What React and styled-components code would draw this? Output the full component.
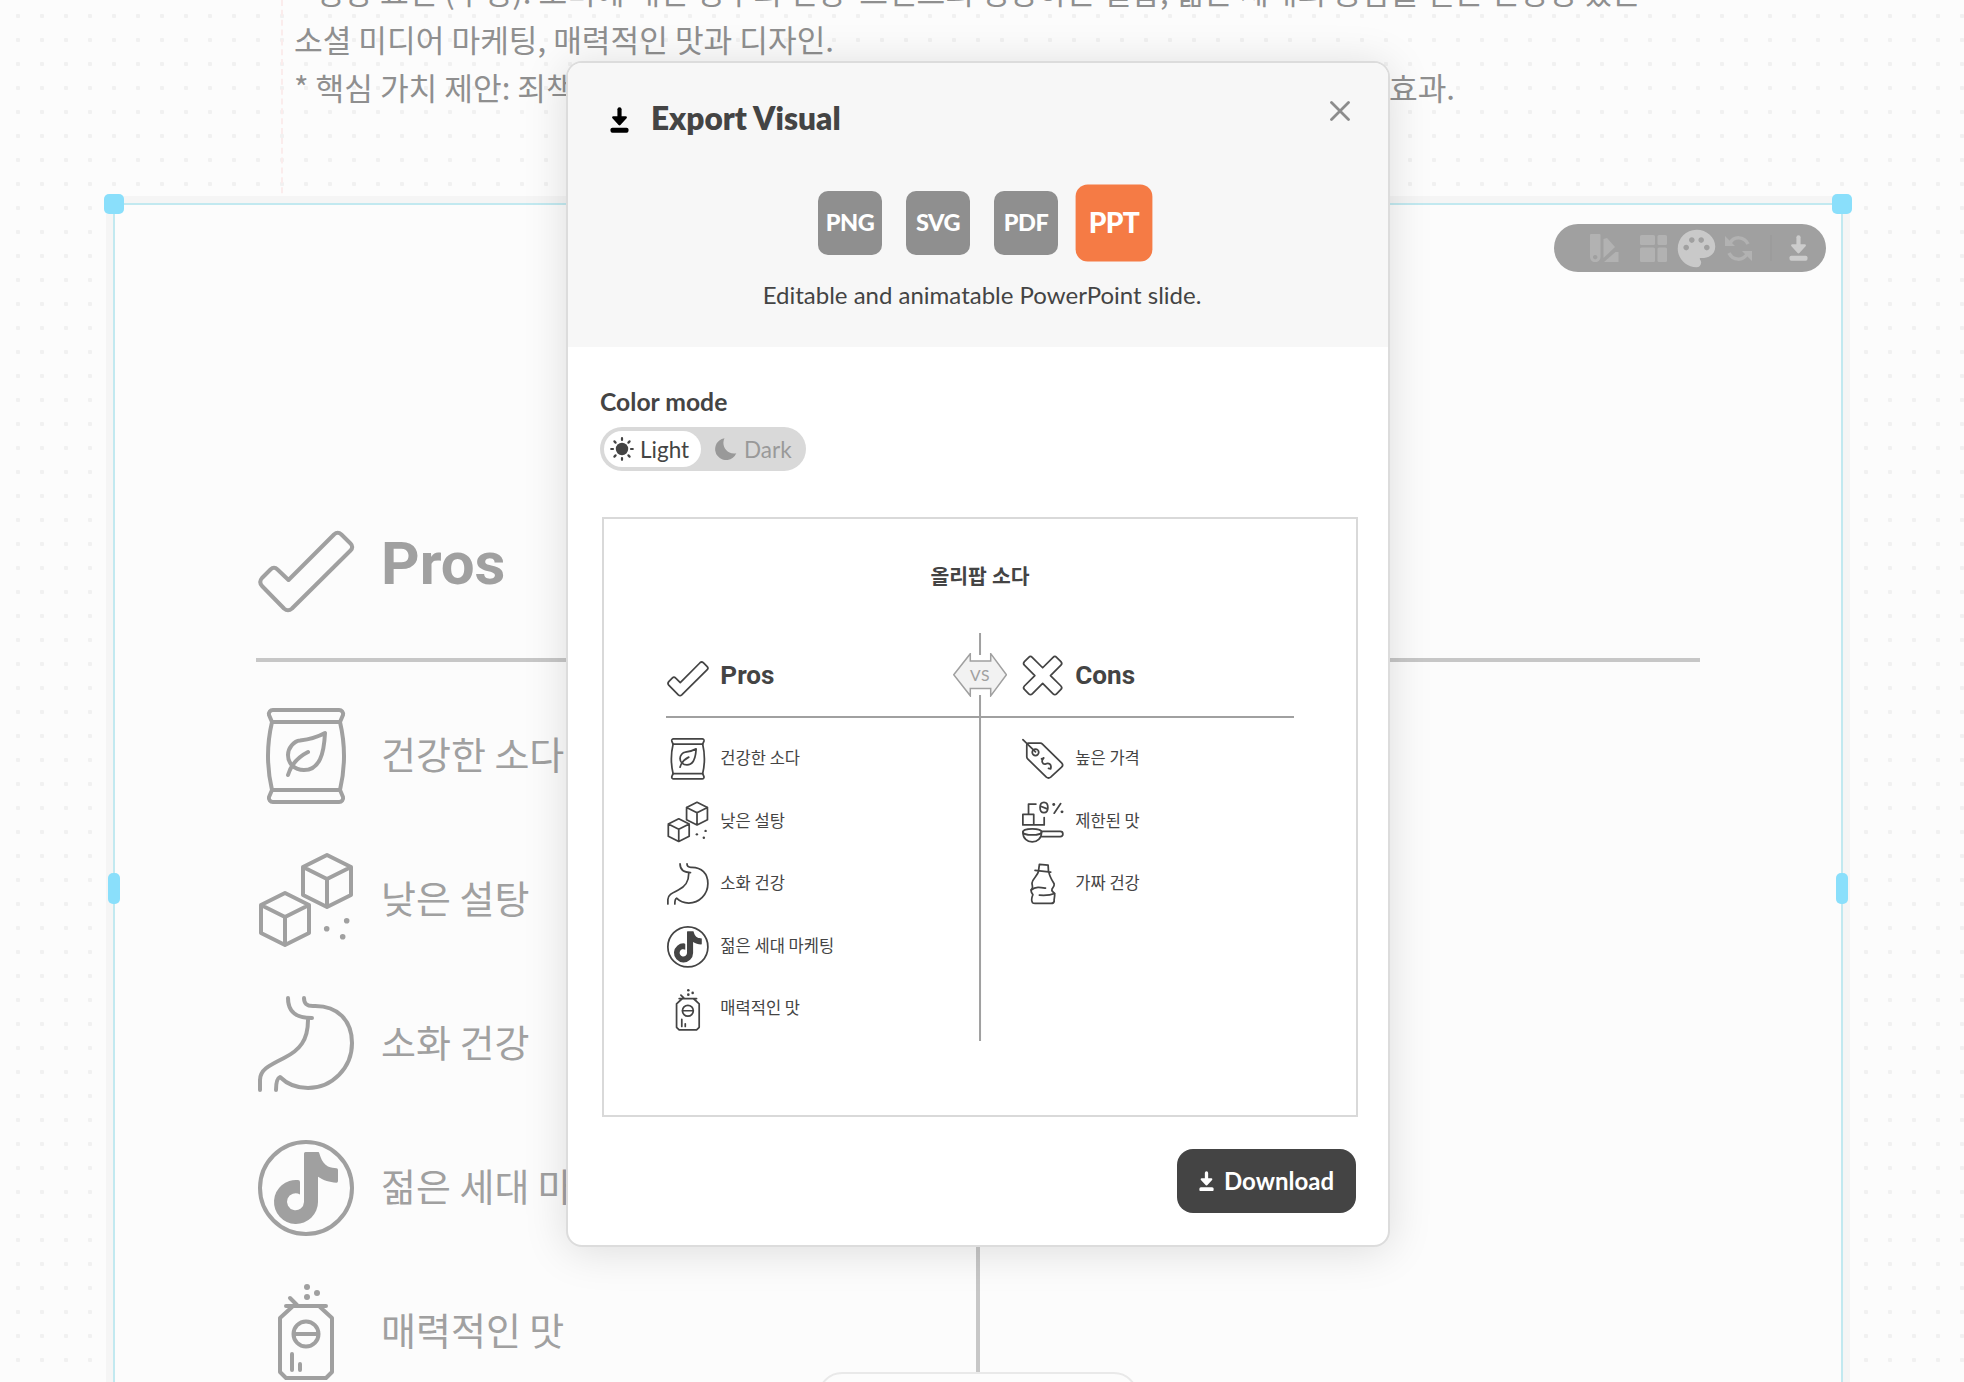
import styled, { createGlobalStyle, css, ThemeProvider } from "styled-components";
import { MdPalette } from "react-icons/md";

const GlobalStyle = createGlobalStyle`
    * {
        box-sizing: border-box;
    }
    body {
        margin: 0;
        background: #fcfcfc;
        font-family: Lato, "Noto Sans CJK KR", sans-serif;
        color: #444;
    }
    button {
        font: inherit;
        border: none;
        padding: 0;
        cursor: pointer;
    }
`;

// one chart is drawn twice: on the page and in the export preview
const pageChart = { unit: 1, rule: "4px", ink: "#a0a0a0", line: "#c7c7c7", badge: "#f8f8f8" };
const previewChart = { unit: 0.435, rule: "2px", ink: "#444", line: "#a0a0a0", badge: "#f2f2f2" };

const px = (n) => (p) => `${n * p.theme.unit}px`;

const icons = {
    check: (
        <path d="M30.500 61L76 15.500q3.700-3.500 7.400 0L92.500 24.500q3.500 3.500 0 7L34 89.500q-4 3.500-8 0L4 67q-3.500-4 0-8L12.500 50.500q3.500-3.500 7 0Z" />
    ),
    cross: (
        <path
            transform="translate(47.5 45)"
            d="M0-18L24-42q4-4 8 0L42-32q4 4 0 8L18 0L42 24q4 4 0 8L32 42q-4 4-8 0L0 18L-24 42q-4 4-8 0L-42 32q-4-4 0-8L-18 0L-42-24q-4-4 0-8L-32-42q4-4 8 0Z"
        />
    ),
    bag: (
        <>
            <path d="M15 2H81a4 4 0 0 1 4 5L82 14H14L11 7a4 4 0 0 1 4-5Z" />
            <path d="M14 82L11 89a4 4 0 0 0 4 5H81a4 4 0 0 0 4-5L82 82Z" />
            <path d="M14 14Q6 48 14 82M82 14Q90 48 82 82" />
            <path d="M67 25C66 45 62 62 46 62C36 62 30 55 30 47C30 40 36 33 42 32.500C50 31.500 58 30 67 25Z" />
            <path d="M30 67C33 57 40 49 50 44" />
        </>
    ),
    cubes: (
        <>
            <path d="M69 3L93 15V43L69 55L45 43V15ZM45 15L69 27L93 15M69 27V55" />
            <path d="M27 41L51 53V81L27 93L3 81V53ZM3 53L27 65L51 53M27 65V93" />
            <g fill="currentColor" stroke="none">
                <circle cx="68.7" cy="76.7" r="2.8" />
                <circle cx="88.7" cy="68.7" r="2.8" />
                <circle cx="84.7" cy="84.7" r="2.8" />
            </g>
        </>
    ),
    stomach: (
        <>
            <path d="M30 2C30 16 38 22 54 22" />
            <path d="M46 2C46 8 49 10 55 10C80 9 94 25 94 47C94 72 74 92 50 92C39 92 29 88 22 81C19.500 82 18 85 18 94" />
            <path d="M50 24C50 44 42 54 26 62C10 70 2 74 2 84V94" />
        </>
    ),
    tiktok: (
        <>
            <circle cx="48" cy="48" r="46" />
            <path
                fill="currentColor"
                stroke="none"
                d="M47.500 12H60.500C62 12 62 22 70 26.500C73 28 76 28 78.500 28.300Q80 28.500 80 30V41Q80 42.700 78.500 42.700C71 42 66 40.500 60 36.700V62A22 22 0 1 1 40 40Q42 40 42 42V54.500A8.500 8.500 0 1 0 46 62V13.500Q46 12 47.500 12Z"
            />
        </>
    ),
    can: (
        <>
            <path d="M28 22H68M32 14L39 21" />
            <path d="M34 23L22 34V88L28 94H68L74 88V34L62 23" />
            <circle cx="48" cy="50" r="12.5" />
            <path d="M36 50H60M34 70V86M42 80V86" />
            <g fill="currentColor" stroke="none">
                <circle cx="49" cy="3" r="3" />
                <circle cx="59" cy="9" r="3" />
                <circle cx="49" cy="13" r="3" />
            </g>
        </>
    ),
    tag: (
        <>
            <path d="M15 12H42q3 0 5 2L91 57q5 5 0 10L66 90q-5 4-10 0L13 48q-2-2-2-5V16q0-4 4-4Z" />
            <circle cx="31" cy="33" r="7.5" />
            <path d="M2 4L31 32" />
            <path d="M50 46C43 52 47 61 54 60C61 56 69 60 66 71M45 48L50 46M66 71L61 70" />
        </>
    ),
    sugar: (
        <>
            <path d="M2 31H27V55H2ZM27 55H51V38M15 31V7H32" />
            <path d="M50.500 3C57 3 59.500 8 59.500 15S57 27 50.500 27S41.500 22 41.500 15S44 3 50.500 3ZM43 12L58 18" />
            <path d="M89 6L74 28" />
            <ellipse cx="23.5" cy="71" rx="21.5" ry="7" />
            <path d="M2 71C2 86 12 94 23.500 94S45 86 45 71M45 70H88a6 6 0 0 1 0 12H43" />
            <g fill="currentColor" stroke="none">
                <circle cx="73" cy="8" r="3.4" />
                <circle cx="92" cy="25" r="3.4" />
            </g>
        </>
    ),
    bottle: (
        <>
            <path d="M38 18L40 3L60 5L61 20M30 17L66 21" />
            <path d="M38 19C36 30 24 36 23 46C23 52 26 56 23 59C18 64 22 68 25 73C22 80 22 88 24 91Q26 93 30 93H67Q73 93 74 88C73 82 76 77 75 71C74 66 66 66 69 60C71 57 75 53 74 48C68 38 64 32 62 22" />
            <path d="M21 62C32 54 42 56 54 58M40 74C54 75 66 74 75 70" />
        </>
    ),
};

const pros = [
    { icon: "bag", label: "건강한 소다" },
    { icon: "cubes", label: "낮은 설탕" },
    { icon: "stomach", label: "소화 건강" },
    { icon: "tiktok", label: "젊은 세대 마케팅" },
    { icon: "can", label: "매력적인 맛" },
];

const cons = [
    { icon: "tag", label: "높은 가격" },
    { icon: "sugar", label: "제한된 맛" },
    { icon: "bottle", label: "가짜 건강" },
];

const formats = ["PNG", "SVG", "PDF", "PPT"];

const ChartIcon = ({ name }) => (
    <IconSvg viewBox="0 0 96 96">{icons[name]}</IconSvg>
);

const DownloadIcon = ({ width }) => (
    <svg width={width} viewBox="0 0 20 27" fill="currentColor" stroke="currentColor" strokeLinejoin="round" strokeLinecap="round">
        <path d="M10 2.500V12" strokeWidth="4.400" />
        <path d="M3.500 11H16.500L10 18Z" strokeWidth="2.600" />
        <rect x="0.500" y="21.800" width="19" height="5.200" rx="2" stroke="none" />
    </svg>
);

const Column = ({ icon, title, items }) => (
    <div>
        <ColumnHead>
            <ChartIcon name={icon} />
            <ColumnTitle>{title}</ColumnTitle>
        </ColumnHead>
        {items.map((item) => (
            <Item key={item.label}>
                <ChartIcon name={item.icon} />
                <ItemLabel>{item.label}</ItemLabel>
            </Item>
        ))}
    </div>
);

const ProsConsChart = () => (
    <Chart>
        <ChartTitle>올리팝 소다</ChartTitle>
        <Columns>
            <Column icon="check" title="Pros" items={pros} />
            <Column icon="cross" title="Cons" items={cons} />
            <Divider>
                <Bar $length={50} />
                <Badge>
                    <svg viewBox="0 0 160 130">
                        <path d="M1.500 65L51 2V24H112V2L159 65L112 128V106H51V128Z" />
                    </svg>
                    <span>VS</span>
                </Badge>
                <Bar $grow />
            </Divider>
        </Columns>
    </Chart>
);

const App = () => {
    return (
        <Page>
            <GlobalStyle />
            <MarginLine />
            <Notes>
                <Line $width={1347}>
                    <span>* 성장 요인 (추정): 소비에 대한 경우의 건강</span>
                    <span>트렌드의 성장하는 결합, 젊은 세대의 공감을 얻는 진정성 있는</span>
                </Line>
                <Line>소셜 미디어 마케팅, 매력적인 맛과 디자인.</Line>
                <Line $width={1161}>
                    <span>* 핵심 가치 제안: 죄책감</span>
                    <span>효과.</span>
                </Line>
            </Notes>

            <Frame>
                <Handle $x="left" $corner />
                <Handle $x="right" $corner />
                <Handle $x="left" />
                <Handle $x="right" />
                <Toolbar>
                    <svg width="29" height="28" viewBox="0 0 29 28" fill="currentColor">
                        <path fillRule="evenodd" d="M1 0H9.500Q10.500 0 10.500 1V23a5.200 5.200 0 0 1-10.500 0V1Q0 0 1 0ZM5.200 21a2.200 2.200 0 1 0 .01 0Z" />
                        <path d="M13.500 5L17 4L25 13L13.500 24Z" />
                        <path d="M25.500 18H28.500V28H14Z" />
                    </svg>
                    <BlocksIcon width="27" height="27" viewBox="0 0 27 27" fill="currentColor">
                        <rect width="15" height="10" rx="1.500" />
                        <rect x="17.500" width="9.500" height="10" rx="1.500" />
                        <rect y="12.500" width="15" height="14.500" rx="1.500" />
                        <rect x="17.500" y="12.500" width="9.500" height="14.500" rx="1.500" />
                    </BlocksIcon>
                    <PaletteIcon size={45} />
                    <svg width="27" height="25" viewBox="0 0 27 25" fill="none" stroke="currentColor" strokeWidth="3.500">
                        <path d="M5 7C9 0 19 0 23 8M22 18C18 25 8 25 4 17" />
                        <path fill="currentColor" stroke="none" d="M0 0L10 10H0ZM27 25L17 15H27Z" />
                    </svg>
                    <ToolbarRule />
                    <Bright>
                        <DownloadIcon width={19} />
                    </Bright>
                </Toolbar>
                <ThemeProvider theme={pageChart}>
                    <ProsConsChart />
                </ThemeProvider>
            </Frame>

            <BottomPanel />

            <Modal>
                <ModalHead>
                    <TitleRow>
                        <TitleIcon>
                            <DownloadIcon width={19} />
                        </TitleIcon>
                        <Title>Export Visual</Title>
                        <Close>
                            <svg width="20" height="20" viewBox="0 0 20 20" stroke="currentColor" strokeWidth="2.800" strokeLinecap="round">
                                <path d="M1.500 1.500L18.500 18.500M18.500 1.500L1.500 18.500" />
                            </svg>
                        </Close>
                    </TitleRow>
                    <Formats>
                        {formats.map((format) => (
                            <Format key={format} $active={format === "PPT"}>
                                {format}
                            </Format>
                        ))}
                    </Formats>
                    <Hint>Editable and animatable PowerPoint slide.</Hint>
                </ModalHead>
                <ModalBody>
                    <Label>Color mode</Label>
                    <Toggle>
                        <Mode $active>
                            <svg width="24" height="24" viewBox="0 0 24 24" stroke="currentColor" strokeWidth="2.200" strokeLinecap="round">
                                <circle cx="12" cy="12" r="6.200" fill="currentColor" stroke="none" />
                                <path d="M12 1.200V3M12 21V22.800M1.200 12H3M21 12H22.800M4.400 4.400L5.600 5.600M18.400 18.400L19.600 19.600M4.400 19.600L5.600 18.400M18.400 5.600L19.600 4.400" />
                            </svg>
                            Light
                        </Mode>
                        <Mode>
                            <svg width="22" height="22" viewBox="0 0 22 22" fill="currentColor">
                                <path d="M9.500 .2C6 7 11 17 21.300 15.300A11 11 0 1 1 9.500 .2Z" />
                            </svg>
                            Dark
                        </Mode>
                    </Toggle>
                    <Preview>
                        <ThemeProvider theme={previewChart}>
                            <ProsConsChart />
                        </ThemeProvider>
                    </Preview>
                    <Download>
                        <DownloadIcon width={15} />
                        <span>Download</span>
                    </Download>
                </ModalBody>
            </Modal>
        </Page>
    );
};

export default App;

const Page = styled.div`
    position: relative;
    height: 1382px;
    overflow: hidden;
    background-color: #fcfcfc;
    background-image: radial-gradient(circle, #f1f1f1 2px, transparent 2.5px);
    background-size: 24px 24px;
    background-position: 6px 4px;
`;

const MarginLine = styled.div`
    position: absolute;
    top: 0;
    left: 281px;
    height: 203px;
    border-left: 2px dashed #fbecec;
`;

const Notes = styled.div`
    margin: -33px 0 92px 294px;
    font-family: "Noto Sans CJK KR", sans-serif;
    font-size: 31.2px;
    line-height: 48px;
    color: #8f8f8f;
    white-space: nowrap;
`;

const Line = styled.div`
    height: 48px;
    display: flex;
    justify-content: space-between;
    width: ${(props) => (props.$width ? `${props.$width}px` : "auto")};
`;

const Frame = styled.div`
    position: relative;
    width: 1730px;
    height: 1300px;
    margin-left: 113px;
    padding: 50px 0 0 141px;
    border: 2px solid #c2e9f0;
    background: #fcfcfc;
    box-shadow: 0 0 0 7px #f5f5f5;
`;

const Handle = styled.div`
    position: absolute;
    ${(props) => props.$x}: ${(props) => (props.$corner ? "-11px" : "-7px")};
    top: ${(props) => (props.$corner ? "-11px" : "668px")};
    width: ${(props) => (props.$corner ? "20px" : "12px")};
    height: ${(props) => (props.$corner ? "20px" : "31px")};
    border-radius: 5px;
    background: #8adffb;
`;

const Toolbar = styled.div`
    position: absolute;
    top: 19px;
    right: 15px;
    width: 272px;
    height: 48px;
    padding: 0 18px 0 36px;
    display: flex;
    align-items: center;
    justify-content: space-between;
    border-radius: 24px;
    background: #a0a0a0;
    color: #b2b2b2;
`;

const BlocksIcon = styled.svg`
    margin: 0 -4px 0 4px;
`;

const PaletteIcon = styled(MdPalette)`
    margin: 0 -11px 0 -7px;
    color: #c9c9c9;
`;

const ToolbarRule = styled.div`
    width: 2px;
    height: 26px;
    background: #9c9c9c;
`;

const Bright = styled.span`
    display: flex;
    color: #ccc;
`;

const Chart = styled.div`
    width: ${px(1444)};
    color: ${(p) => p.theme.ink};
    font-family: Roboto, "Noto Sans CJK KR", sans-serif;
    white-space: nowrap;
`;

const ChartTitle = styled.div`
    height: ${px(160)};
    line-height: ${px(166)};
    text-align: center;
    font-size: ${px(47)};
    font-weight: 700;
`;

const Columns = styled.div`
    position: relative;
    display: grid;
    grid-template-columns: ${px(816)} 1fr;
    margin-top: ${px(51)};
    height: ${px(938)};
`;

const ColumnHead = styled.div`
    height: ${px(196)};
    padding: ${px(53)} 0 0 ${px(2)};
    display: flex;
    gap: ${px(27)};
    border-bottom: ${(p) => p.theme.rule} solid ${(p) => p.theme.line};
    margin-bottom: ${px(22)};
`;

const ColumnTitle = styled.div`
    font-size: ${px(60)};
    font-weight: 700;
    line-height: ${px(89)};
`;

const Item = styled.div`
    height: ${px(144)};
    padding-left: ${px(2)};
    display: flex;
    align-items: center;
    gap: ${px(27)};
`;

const ItemLabel = styled.div`
    padding-bottom: ${px(7)};
    font-family: "Noto Sans CJK KR", sans-serif;
    font-size: ${px(38)};
    line-height: ${px(48)};
`;

const IconSvg = styled.svg`
    width: ${px(96)};
    height: ${px(96)};
    flex: none;
    overflow: visible;
    fill: none;
    stroke: currentColor;
    stroke-width: 4;
    stroke-linecap: round;
    stroke-linejoin: round;
`;

const Divider = styled.div`
    position: absolute;
    top: 0;
    bottom: 0;
    left: 50%;
    transform: translateX(-50%);
    display: flex;
    flex-direction: column;
    align-items: center;
`;

const Bar = styled.div`
    width: ${(p) => p.theme.rule};
    background: ${(p) => p.theme.line};
    ${(p) =>
        p.$grow
            ? css`
                  flex: 1;
              `
            : css`
                  height: ${px(p.$length)};
              `}
`;

const Badge = styled.div`
    position: relative;
    width: ${px(124)};
    height: ${px(100)};
    margin: ${px(-3)} 0;
    display: grid;
    place-items: center;
    font-family: Lato, sans-serif;
    font-size: ${px(36)};
    letter-spacing: 0.04em;
    color: ${(p) => p.theme.line};

    svg {
        position: absolute;
        inset: 0;
        width: 100%;
        height: 100%;
        fill: ${(p) => p.theme.badge};
        stroke: ${(p) => p.theme.line};
        stroke-width: 4.5;
    }
    span {
        position: relative;
    }
`;

const BottomPanel = styled.div`
    position: absolute;
    top: 1372px;
    left: 818px;
    width: 320px;
    height: 60px;
    border: 2px solid #e9e9e9;
    border-radius: 24px;
    background: #fcfcfc;
`;

const Modal = styled.div`
    position: absolute;
    top: 61px;
    left: 566px;
    width: 824px;
    height: 1186px;
    border: 2px solid #dcdcdc;
    border-radius: 16px;
    background: #fff;
    box-shadow: 0 4px 44px rgba(0, 0, 0, 0.13);
    overflow: hidden;
`;

const ModalHead = styled.div`
    height: 284px;
    padding: 32px 38px 0 42px;
    background: #f7f7f7;
`;

const TitleRow = styled.div`
    height: 50px;
    display: flex;
    align-items: center;
`;

const TitleIcon = styled.span`
    display: flex;
    color: #000;
`;

const Title = styled.h2`
    margin: -4px auto 0 22px;
    font-size: 31.6px;
    font-weight: 800;
    line-height: 50px;
`;

const Close = styled.button`
    align-self: flex-start;
    display: flex;
    margin-top: 6px;
    background: none;
    color: #8c8c8c;
`;

const Formats = styled.div`
    display: flex;
    justify-content: center;
    gap: 24px;
    margin-top: 46px;
    padding-left: 4px;
`;

const Format = styled.button`
    width: 64px;
    height: 64px;
    padding-bottom: 2px;
    border-radius: 10px;
    background: ${(props) => (props.$active ? "#f57b45" : "#8f8f8f")};
    transform: ${(props) => (props.$active ? "scale(1.2)" : "none")};
    color: #fff;
    font-size: 23.5px;
    font-weight: 900;
    letter-spacing: -0.5px;
`;

const Hint = styled.p`
    margin: 22px 0 0;
    padding-left: 4px;
    font-size: 24px;
    line-height: 36px;
    text-align: center;
`;

const ModalBody = styled.div`
    display: flex;
    flex-direction: column;
    align-items: flex-start;
    padding: 37px 32px 0 32px;
`;

const Label = styled.div`
    font-size: 24.7px;
    font-weight: 700;
    line-height: 36px;
`;

const Toggle = styled.div`
    display: flex;
    gap: 4px;
    width: 206px;
    height: 44px;
    margin-top: 7px;
    padding: 4px;
    border-radius: 22px;
    background: #d9d9d9;
`;

const Mode = styled.button`
    display: flex;
    align-items: center;
    gap: ${(props) => (props.$active ? "6px" : "7px")};
    width: 97px;
    height: 36px;
    padding-left: ${(props) => (props.$active ? "6px" : "10px")};
    border-radius: 18px;
    background: ${(props) => (props.$active ? "#fff" : "transparent")};
    color: ${(props) => (props.$active ? "#444" : "#999")};
    font-size: 22.5px;
`;

const Preview = styled.div`
    width: 756px;
    height: 600px;
    margin: 46px 0 0 2px;
    padding: 22px 0 0 62px;
    border: 2px solid #d9d9d9;
`;

const Download = styled.button`
    display: flex;
    align-items: center;
    justify-content: center;
    align-self: flex-end;
    gap: 10px;
    width: 179px;
    height: 64px;
    margin-top: 32px;
    border-radius: 16px;
    background: #444;
    color: #fff;
    font-size: 24px;
    font-weight: 700;

    span {
        padding-bottom: 2px;
    }
`;
